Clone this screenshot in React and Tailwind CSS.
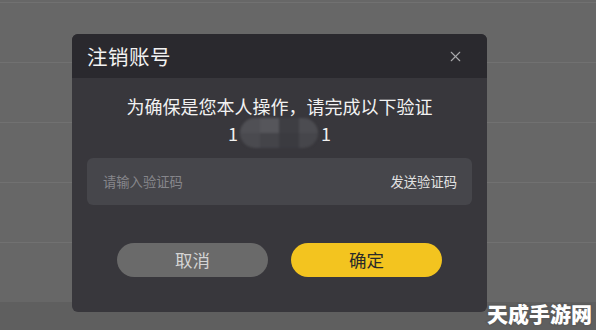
import { X } from 'lucide-react';

const rows = [0, 1, 2, 3, 4];

function MaskedPhone() {
  // pixelated blur over the middle digits
  const cols = [
    ['#505055', '#4a4a4f'],
    ['#56565b', '#444449'],
    ['#3e3e43', '#3b3b40'],
    ['#4c4c51', '#46464b'],
  ];
  return (
    <div className="flex items-center justify-center text-[18px] leading-[30px] text-[#f0f0f0]">
      <span className="mr-[2px]">1</span>
      <div className="flex h-[30px] w-[78px] overflow-hidden rounded-full blur-[1px]">
        {cols.map((c, i) => (
          <div key={i} className="flex flex-1 flex-col">
            <div className="flex-1" style={{ backgroundColor: c[0] }} />
            <div className="flex-1" style={{ backgroundColor: c[1] }} />
          </div>
        ))}
      </div>
      <span className="ml-[3px]">1</span>
    </div>
  );
}

export default function App() {
  return (
    <div
      className="relative h-[330px] w-[596px] overflow-hidden bg-[#5f5f5f]"
      style={{ fontFamily: '"Noto Sans CJK SC", "Noto Sans", sans-serif' }}
    >
      {/* list behind the dialog */}
      <div className="flex flex-col bg-[#676767] pt-[2px]">
        {rows.map((r) => (
          <div key={r} className="h-[60px] border-t border-[#717171]" />
        ))}
      </div>

      {/* dialog */}
      <div className="absolute left-[72px] top-[34px] flex h-[278px] w-[415px] flex-col overflow-hidden rounded-[6px] bg-[#38373c]">
        <div className="flex h-[44px] items-center justify-between bg-[#2a292e] pl-[15px] pr-[23px]">
          <span className="text-[20.5px] tracking-[0.5px] text-[#f2f2f2]">注销账号</span>
          <X size={17} strokeWidth={1.6} className="text-[#a8a8aa]" />
        </div>

        <div className="flex flex-1 flex-col px-[15px] pt-[16px]">
          <p className="text-center text-[18px] leading-[24px] text-[#f2f2f2]">
            为确保是您本人操作，请完成以下验证
          </p>
          <MaskedPhone />

          <div className="mt-[10px] flex h-[47px] items-center justify-between rounded-[6px] bg-[#46464b] pl-[16px] pr-[15px]">
            <span className="text-[13.3px] text-[#86868b]">请输入验证码</span>
            <span className="text-[13.3px] text-[#e2e2e2]">发送验证码</span>
          </div>

          <div className="mt-[38px] flex justify-center gap-[23px]">
            <button className="flex h-[34px] w-[151px] items-center justify-center rounded-full bg-[#6a6a6a] text-[17.5px] text-[#d4d4d4]">
              取消
            </button>
            <button className="flex h-[34px] w-[151px] items-center justify-center rounded-full bg-[#f3c41f] text-[17.5px] text-[#2a2a2a]">
              确定
            </button>
          </div>
        </div>
      </div>

      {/* site watermark */}
      <div className="absolute right-[4px] bottom-[5px] text-[21px] font-black leading-[24px] text-white [-webkit-text-stroke:3px_#5a5a5a] [paint-order:stroke_fill]">
        天成手游网
      </div>
    </div>
  );
}
